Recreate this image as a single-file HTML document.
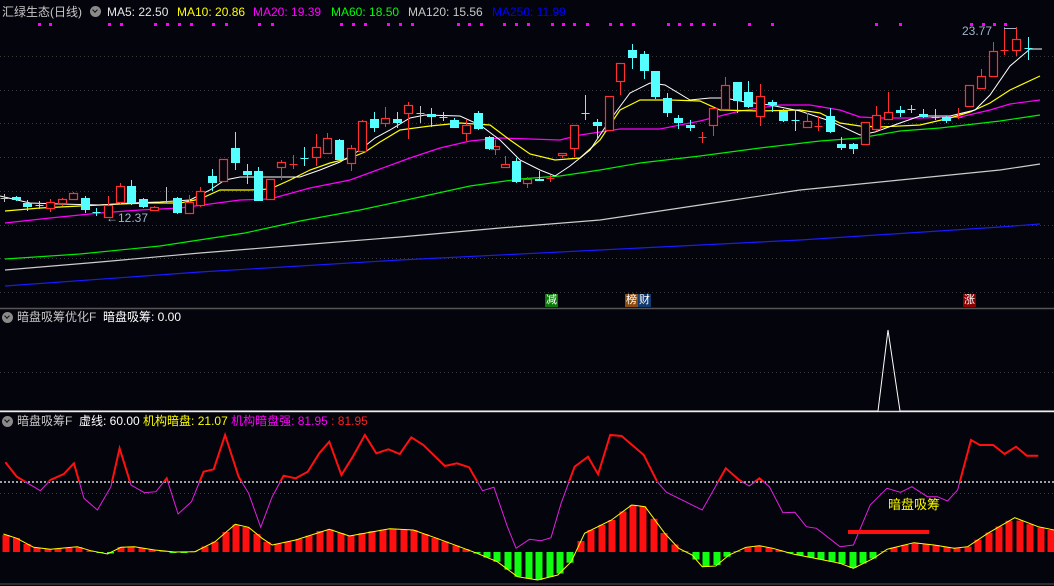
<!DOCTYPE html>
<html><head><meta charset="utf-8">
<style>
html,body{margin:0;padding:0;background:#04040c;}
#w{position:relative;width:1054px;height:586px;overflow:hidden;background:#04040c;font-family:"Liberation Sans","Noto Sans CJK SC",sans-serif;font-size:12px;}
.t{position:absolute;white-space:nowrap;line-height:14px;}
.ci{position:absolute;width:11px;height:11px;border-radius:50%;background:#8a8a8a;}
.ci:after{content:"";position:absolute;left:3px;top:2px;width:3px;height:3px;border-right:1.5px solid #111;border-bottom:1.5px solid #111;transform:rotate(45deg);}
.bx{position:absolute;width:13px;height:13px;color:#fff;font-size:11px;line-height:13px;text-align:center;}
svg{position:absolute;left:0;top:0;}
.rb{fill:#04040c;stroke:#ff3030;stroke-width:1.2}
.cb{fill:#54ffff}
.hr{fill:#ff1010}.hg{fill:#10ff10}
</style></head><body>
<div id="w">
<svg width="1054" height="586" viewBox="0 0 1054 586">
<g stroke="#3a3a3a" stroke-dasharray="1 3">
<line x1="0" y1="56.5" x2="1054" y2="56.5"/><line x1="0" y1="90.5" x2="1054" y2="90.5"/><line x1="0" y1="123.5" x2="1054" y2="123.5"/><line x1="0" y1="157.5" x2="1054" y2="157.5"/><line x1="0" y1="191.5" x2="1054" y2="191.5"/><line x1="0" y1="225.5" x2="1054" y2="225.5"/><line x1="0" y1="258.5" x2="1054" y2="258.5"/><line x1="0" y1="292.5" x2="1054" y2="292.5"/><line x1="0" y1="372.5" x2="1054" y2="372.5"/><line x1="0" y1="493.5" x2="1054" y2="493.5"/>
</g>
<line x1="0" y1="308.5" x2="1054" y2="308.5" stroke="#555" stroke-width="1.5"/>
<line x1="0" y1="411.5" x2="1054" y2="411.5" stroke="#ddd" stroke-width="1.5"/>
<line x1="0" y1="584" x2="1054" y2="584" stroke="#555"/>
<g fill="#ff00ff">
<rect x="38" y="23" width="3" height="3"/><rect x="49" y="23" width="3" height="3"/><rect x="108" y="23" width="3" height="3"/><rect x="120" y="23" width="3" height="3"/><rect x="154" y="23" width="3" height="3"/><rect x="166" y="23" width="3" height="3"/><rect x="178" y="23" width="3" height="3"/><rect x="190" y="23" width="3" height="3"/><rect x="212" y="23" width="3" height="3"/><rect x="225" y="23" width="3" height="3"/><rect x="258" y="23" width="3" height="3"/><rect x="271" y="23" width="3" height="3"/><rect x="340" y="23" width="3" height="3"/><rect x="352" y="23" width="3" height="3"/><rect x="364" y="23" width="3" height="3"/><rect x="387" y="23" width="3" height="3"/><rect x="399" y="23" width="3" height="3"/><rect x="411" y="23" width="3" height="3"/><rect x="457" y="23" width="3" height="3"/><rect x="468" y="23" width="3" height="3"/><rect x="480" y="23" width="3" height="3"/><rect x="503" y="23" width="3" height="3"/><rect x="515" y="23" width="3" height="3"/><rect x="527" y="23" width="3" height="3"/><rect x="551" y="23" width="3" height="3"/><rect x="562" y="23" width="3" height="3"/><rect x="573" y="23" width="3" height="3"/><rect x="586" y="23" width="3" height="3"/><rect x="609" y="23" width="3" height="3"/><rect x="620" y="23" width="3" height="3"/><rect x="632" y="23" width="3" height="3"/><rect x="667" y="23" width="3" height="3"/><rect x="678" y="23" width="3" height="3"/><rect x="690" y="23" width="3" height="3"/><rect x="702" y="23" width="3" height="3"/><rect x="713" y="23" width="3" height="3"/><rect x="748" y="23" width="3" height="3"/><rect x="771" y="23" width="3" height="3"/><rect x="875" y="23" width="3" height="3"/><rect x="899" y="23" width="3" height="3"/><rect x="970" y="23" width="3" height="3"/><rect x="982" y="23" width="3" height="3"/><rect x="993" y="23" width="3" height="3"/><rect x="1004" y="23" width="3" height="3"/>
</g>
<g fill="none" stroke-width="1.2">
<polyline stroke="#1a1aff" points="5,286 200,272 400,260 600,250 800,240 1000,227 1040,224"/>
<polyline stroke="#cccccc" points="5,270 100,262 200,253 300,245 400,237 500,228 600,220 700,205 800,190 900,180 1000,170 1040,164"/>
<polyline stroke="#00ee00" points="5,259 80,254 160,246 245,233 300,221 360,210 420,197 470,186 520,179 560,176 600,170 640,163 700,156 760,148 820,141 860,138 900,131 940,128 1000,121 1040,115"/>
<polyline stroke="#ff00ff" points="5,223 50,218 100,213 140,210 180,208 210,204 240,200 270,199 310,188 350,180 380,169 410,158 440,148 470,141 500,138 530,139 560,140 580,135 620,129 660,129 700,121 740,111 780,105 810,105 840,110 860,117 880,118 920,118 960,117 990,110 1010,104 1040,100"/>
<polyline stroke="#ffff00" points="5,211 40,208 80,206 120,204 150,203 180,203 200,199 220,190 250,190 270,189 290,180 310,170 330,163 350,158 365,152 380,142 400,130 430,126 460,123 490,125 510,140 530,154 555,160 580,158 600,140 620,110 640,100 670,100 700,101 720,110 760,111 800,110 820,113 840,123 860,126 880,127 920,125 950,118 970,112 990,103 1010,90 1040,76"/>
<polyline stroke="#ffffff" stroke-width="1" points="0,196 30,203 60,204 100,205 130,203 160,202 190,200 210,190 225,180 240,177 300,177 320,170 340,162 360,150 375,138 390,130 410,118 425,115 460,116 480,125 500,140 520,160 540,170 555,176 570,166 590,150 610,120 630,93 650,83 665,85 690,100 710,98 725,98 745,102 770,105 800,111 830,121 860,135 875,132 900,123 920,116 950,116 975,110 990,95 1010,66 1030,49 1042,49"/>
</g>
<!-- gray crosses -->
<path stroke="#c0c0c0" fill="none" d="M4.5 194V202M0.5 198.5H8.5M166.5 187V203M162.5 201.5H170.5M420.5 106V123M416.5 113.5H424.5"/>
<!-- red wicks -->
<path stroke="#ff3030" fill="none" d="M50.5 199V212M62.5 198V206M73.5 192V200M108.5 196V217M120.5 183V204M154.5 206V211M189.5 195V213M200.5 187V207M223.5 159V181M270.5 179V200M281.5 160V180M293.5 155V169M289.5 164.5H297.5M316.5 134V166M327.5 133V153M351.5 145V171M362.5 120V151M385.5 107V127M408.5 102V139M466.5 120V141M495.5 140V155M505.5 156V167M527.5 177V188M550.5 175V182M546.5 178.5H554.5M562.5 153V158M574.5 125V157M609.5 96V130M620.5 63V95M702.5 132V143M698.5 137.5H706.5M713.5 108V136M725.5 77V109M760.5 84V126M807.5 113V127M818.5 116V131M814.5 126.5H822.5M865.5 122V144M876.5 106V131M888.5 92V119M958.5 108V119M954.5 117.5H962.5M969.5 85V106M981.5 69V88M993.5 42V77M1004.5 27V55M1000.5 50.5H1008.5M1016.5 27V56"/>
<g class="rb">
<rect x="46.5" y="202.5" width="8" height="6"/><rect x="58.5" y="199.5" width="8" height="4"/><rect x="69.5" y="193.5" width="8" height="6"/><rect x="104.5" y="205.5" width="8" height="12"/><rect x="116.5" y="186.5" width="8" height="16"/><rect x="150.5" y="207.5" width="8" height="3"/><rect x="185.5" y="202.5" width="8" height="11"/><rect x="196.5" y="191.5" width="8" height="14"/><rect x="219.5" y="159.5" width="8" height="22"/><rect x="266.5" y="179.5" width="8" height="20"/><rect x="277.5" y="162.5" width="8" height="5"/><rect x="312.5" y="147.5" width="8" height="10"/><rect x="323.5" y="138.5" width="8" height="15"/><rect x="347.5" y="148.5" width="8" height="15"/><rect x="358.5" y="121.5" width="8" height="30"/><rect x="381.5" y="118.5" width="8" height="5"/><rect x="404.5" y="105.5" width="8" height="8"/><rect x="462.5" y="125.5" width="8" height="8"/><rect x="491.5" y="146.5" width="8" height="3"/><rect x="501.5" y="164.5" width="8" height="3"/><rect x="523.5" y="179.5" width="8" height="4"/><rect x="558.5" y="153.5" width="8" height="2"/><rect x="570.5" y="125.5" width="8" height="23"/><rect x="605.5" y="96.5" width="8" height="34"/><rect x="616.5" y="63.5" width="8" height="18"/><rect x="709.5" y="108.5" width="8" height="17"/><rect x="721.5" y="85.5" width="8" height="24"/><rect x="756.5" y="96.5" width="8" height="20"/><rect x="803.5" y="121.5" width="8" height="6"/><rect x="861.5" y="122.5" width="8" height="22"/><rect x="872.5" y="115.5" width="8" height="14"/><rect x="884.5" y="112.5" width="8" height="7"/><rect x="965.5" y="85.5" width="8" height="21"/><rect x="977.5" y="76.5" width="8" height="12"/><rect x="989.5" y="51.5" width="8" height="25"/><rect x="1012.5" y="39.5" width="8" height="11"/>
</g>
<!-- cyan wicks -->
<path stroke="#54ffff" fill="none" d="M16.5 196V201M27.5 200V211M39.5 201V209M35.5 205.5H43.5M85.5 196V213M96.5 208V216M92.5 212.5H100.5M131.5 180V205M143.5 198V208M177.5 197V214M212.5 169V191M235.5 132V170M247.5 164V184M258.5 167V201M304.5 147V166M300.5 158.5H308.5M339.5 139V161M374.5 112V132M397.5 112V128M431.5 108V127M443.5 112V121M439.5 117.5H447.5M454.5 118V128M478.5 111V130M489.5 136V150M516.5 158V183M539.5 171V181M585.5 95V120M581.5 113.5H589.5M597.5 119V138M632.5 44V69M644.5 51V79M655.5 71V99M667.5 93V117M678.5 115V129M690.5 120V131M737.5 82V113M748.5 81V108M772.5 100V112M783.5 109V122M795.5 110V131M791.5 120.5H799.5M830.5 108V133M841.5 137V150M853.5 143V154M900.5 106V117M911.5 105V113M907.5 109.5H915.5M923.5 109V118M935.5 109V120M931.5 117.5H939.5M946.5 116V123M1028.5 37V60M1024.5 48.5H1032.5"/>
<g class="cb">
<rect x="12" y="197" width="9" height="3"/><rect x="23" y="203" width="9" height="4"/><rect x="81" y="198" width="9" height="12"/><rect x="127" y="186" width="9" height="17"/><rect x="139" y="199" width="9" height="8"/><rect x="173" y="198" width="9" height="15"/><rect x="208" y="176" width="9" height="7"/><rect x="231" y="148" width="9" height="15"/><rect x="243" y="171" width="9" height="4"/><rect x="254" y="171" width="9" height="30"/><rect x="335" y="140" width="9" height="20"/><rect x="370" y="119" width="9" height="9"/><rect x="393" y="119" width="9" height="4"/><rect x="427" y="114" width="9" height="3"/><rect x="450" y="120" width="9" height="8"/><rect x="474" y="113" width="9" height="16"/><rect x="485" y="137" width="9" height="12"/><rect x="512" y="161" width="9" height="21"/><rect x="535" y="179" width="9" height="2"/><rect x="593" y="122" width="9" height="4"/><rect x="628" y="50" width="9" height="8"/><rect x="640" y="54" width="9" height="17"/><rect x="651" y="71" width="9" height="26"/><rect x="663" y="98" width="9" height="15"/><rect x="674" y="118" width="9" height="5"/><rect x="686" y="125" width="9" height="3"/><rect x="733" y="82" width="9" height="19"/><rect x="744" y="92" width="9" height="15"/><rect x="768" y="102" width="9" height="3"/><rect x="779" y="111" width="9" height="10"/><rect x="826" y="116" width="9" height="16"/><rect x="837" y="144" width="9" height="4"/><rect x="849" y="144" width="9" height="5"/><rect x="896" y="110" width="9" height="3"/><rect x="919" y="114" width="9" height="3"/><rect x="942" y="117" width="9" height="4"/>
</g>
<line x1="1004" y1="28.5" x2="1016" y2="28.5" stroke="#a0b4c8"/>
<!-- spike panel -->
<polyline fill="none" stroke="#fff" points="0,411 878,411 888,330 900,411 1054,411"/>
<!-- histogram -->
<g class="hr">
<rect x="2.5" y="535" width="7" height="17"/><rect x="13" y="538" width="7" height="14"/><rect x="23.5" y="544" width="7" height="8"/><rect x="33.5" y="548" width="7" height="4"/><rect x="44.5" y="549" width="7" height="3"/><rect x="54.5" y="548.5" width="7" height="3.5"/><rect x="65.5" y="548" width="7" height="4"/><rect x="75.5" y="547" width="7" height="5"/><rect x="86.5" y="550.5" width="7" height="1.5"/><rect x="117.5" y="547" width="7" height="5"/><rect x="127.5" y="547" width="7" height="5"/><rect x="138.5" y="548" width="7" height="4"/><rect x="148.5" y="549.6" width="7" height="2.4"/><rect x="159.5" y="551" width="7" height="1"/><rect x="190.5" y="551" width="7" height="1"/><rect x="201.5" y="546.5" width="7" height="5.5"/><rect x="211.5" y="541.7" width="7" height="10.3"/><rect x="222.5" y="532" width="7" height="20"/><rect x="232.5" y="524.5" width="7" height="27.5"/><rect x="242.5" y="527" width="7" height="25"/><rect x="253.5" y="534" width="7" height="18"/><rect x="263.5" y="542" width="7" height="10"/><rect x="274.5" y="543.8" width="7" height="8.2"/><rect x="284.5" y="541.7" width="7" height="10.3"/><rect x="295.5" y="539" width="7" height="13"/><rect x="305.5" y="535.7" width="7" height="16.3"/><rect x="316.5" y="531" width="7" height="21"/><rect x="326.5" y="529.5" width="7" height="22.5"/><rect x="337.5" y="533" width="7" height="19"/><rect x="347.5" y="535.5" width="7" height="16.5"/><rect x="358.5" y="533" width="7" height="19"/><rect x="368.5" y="531" width="7" height="21"/><rect x="379.5" y="529.6" width="7" height="22.4"/><rect x="389.5" y="528.8" width="7" height="23.2"/><rect x="400.5" y="529.5" width="7" height="22.5"/><rect x="410.5" y="530" width="7" height="22"/><rect x="421.5" y="534" width="7" height="18"/><rect x="431.5" y="538" width="7" height="14"/><rect x="441.5" y="541.5" width="7" height="10.5"/><rect x="452.5" y="545.5" width="7" height="6.5"/><rect x="462.5" y="549" width="7" height="3"/><rect x="577.5" y="541" width="7" height="11"/><rect x="587.5" y="530" width="7" height="22"/><rect x="598.5" y="524.8" width="7" height="27.2"/><rect x="608.5" y="520" width="7" height="32"/><rect x="619.5" y="511.5" width="7" height="40.5"/><rect x="629.5" y="505" width="7" height="47"/><rect x="639.5" y="506.5" width="7" height="45.5"/><rect x="650.5" y="518.8" width="7" height="33.2"/><rect x="660.5" y="533" width="7" height="19"/><rect x="671.5" y="544.5" width="7" height="7.5"/><rect x="681.5" y="551" width="7" height="1"/><rect x="733.5" y="551" width="7" height="1"/><rect x="744.5" y="547" width="7" height="5"/><rect x="754.5" y="545.8" width="7" height="6.2"/><rect x="765.5" y="547.6" width="7" height="4.4"/><rect x="775.5" y="550" width="7" height="2"/><rect x="880.5" y="551" width="7" height="1"/><rect x="890.5" y="547.6" width="7" height="4.4"/><rect x="901.5" y="544.8" width="7" height="7.2"/><rect x="911.5" y="542.8" width="7" height="9.2"/><rect x="922.5" y="544" width="7" height="8"/><rect x="932.5" y="545.3" width="7" height="6.7"/><rect x="943.5" y="547" width="7" height="5"/><rect x="953.5" y="547.6" width="7" height="4.4"/><rect x="964.5" y="546.6" width="7" height="5.4"/><rect x="974.5" y="539.7" width="7" height="12.3"/><rect x="985.5" y="532.6" width="7" height="19.4"/><rect x="995.5" y="526.5" width="7" height="25.5"/><rect x="1005.5" y="520.8" width="7" height="31.2"/><rect x="1016.5" y="520.6" width="7" height="31.4"/><rect x="1026.5" y="524.2" width="7" height="27.8"/><rect x="1037.5" y="527.4" width="7" height="24.6"/><rect x="1047.5" y="530" width="7" height="22"/>
</g>
<g class="hg">
<rect x="96.5" y="552" width="7" height="1"/><rect x="107" y="552" width="7" height="1.5"/><rect x="169.5" y="552" width="7" height="1"/><rect x="180.5" y="552" width="7" height="1"/><rect x="473.5" y="552" width="7" height="1.5"/><rect x="483.5" y="552" width="7" height="5.5"/><rect x="493.5" y="552" width="7" height="9.7"/><rect x="504.5" y="552" width="7" height="17.6"/><rect x="514.5" y="552" width="7" height="24.7"/><rect x="525.5" y="552" width="7" height="26.6"/><rect x="535.5" y="552" width="7" height="27.9"/><rect x="546.5" y="552" width="7" height="25"/><rect x="556.5" y="552" width="7" height="21.5"/><rect x="566.5" y="552" width="7" height="10.7"/><rect x="692.5" y="552" width="7" height="7.5"/><rect x="702.5" y="552" width="7" height="14.6"/><rect x="713.5" y="552" width="7" height="13"/><rect x="723.5" y="552" width="7" height="4.7"/><rect x="786.5" y="552" width="7" height="1.2"/><rect x="796.5" y="552" width="7" height="3.4"/><rect x="807.5" y="552" width="7" height="5.5"/><rect x="817.5" y="552" width="7" height="7.5"/><rect x="828.5" y="552" width="7" height="9.7"/><rect x="838.5" y="552" width="7" height="12"/><rect x="849.5" y="552" width="7" height="16"/><rect x="859.5" y="552" width="7" height="11.5"/><rect x="869.5" y="552" width="7" height="6.5"/>
</g>
<polyline fill="none" stroke="#ffff00" points="3.4,534 16.8,538.3 33.6,547.3 50.4,549.3 77.3,546.7 90.7,550.7 107.5,554 121,547.3 134.4,546.7 154.6,550 174.7,552 194.9,551.7 215,541.7 235.2,524.3 248.6,527.3 262.1,538.3 272.2,545 295.7,540 329.3,529.3 349.4,536 389.8,528.7 413.3,530 436.8,538.3 463.7,548.3 477.1,553.3 497.3,561.7 517.4,576.7 537.6,580 557.8,575 571.2,561.7 584.6,533.3 611.5,520 631.7,505 645.1,506.7 665.3,534 678.7,548.3 692.2,555 702.2,566.7 715.7,566 729.1,555 745.9,547.3 759.4,545.7 772.8,548.3 793,554 819.8,559.3 840,563.3 853.4,568.3 873.6,558.3 887,549.3 913.9,542.7 934.1,545 954.2,548.3 967.7,546.7 987.8,533.3 1014.7,517.7 1038.2,526.7 1054,530"/>
<line x1="0" y1="482" x2="1054" y2="482" stroke="#fff" stroke-width="1.2" stroke-dasharray="2 2"/>
<defs><clipPath id="up"><rect x="0" y="420" width="1054" height="62"/></clipPath></defs>
<polyline id="rl" fill="none" stroke="#e020e0" stroke-width="1" points="5.4,462.3 16.8,476.7 40.3,490.7 50.4,480 63.8,474 73.9,463.3 84,498.3 97.4,510 110.9,486.7 119.6,448.3 131,485 144.5,492.7 155.9,491.7 166.7,478.3 178.1,514 191.5,501.7 203.6,471.7 213.7,469.3 225.1,435 238.6,476.7 248.6,493.3 260.7,527.3 272.2,496.7 283.6,475.7 295.7,478.3 307.8,471.7 319.2,453.3 329.3,441.7 341.4,475 352.8,456.7 364.9,435 376.3,453.3 388.4,449.3 399.8,454 411.3,437.3 423.4,445 444.9,466 457,463.3 469.1,467.3 482.5,490.7 493.9,487.3 507.4,526.7 516.1,548.3 529.5,539.3 541,540.7 551,537.7 561.1,503.3 574.6,466.7 588,456.7 598.1,474.3 610.2,435 621.6,436 643.8,455 657.2,481.7 666.6,492.3 702.2,510 725.8,468.3 739.2,480 749.3,486 759.4,478.3 769.4,486.7 782.9,512.7 794.9,512.3 806.4,526.7 816.5,528.3 840,546.7 853.4,545 870.2,505 887,488.3 900.5,492.3 911.9,486.7 927.4,496.7 937.4,496.7 947.5,501 957.6,490 971,440 979.8,445 993.2,445 1004.6,454 1016,446.7 1026.8,455.7 1038.2,455.7"/>
<polyline fill="none" stroke="#ff1010" stroke-width="2" clip-path="url(#up)" points="5.4,462.3 16.8,476.7 40.3,490.7 50.4,480 63.8,474 73.9,463.3 84,498.3 97.4,510 110.9,486.7 119.6,448.3 131,485 144.5,492.7 155.9,491.7 166.7,478.3 178.1,514 191.5,501.7 203.6,471.7 213.7,469.3 225.1,435 238.6,476.7 248.6,493.3 260.7,527.3 272.2,496.7 283.6,475.7 295.7,478.3 307.8,471.7 319.2,453.3 329.3,441.7 341.4,475 352.8,456.7 364.9,435 376.3,453.3 388.4,449.3 399.8,454 411.3,437.3 423.4,445 444.9,466 457,463.3 469.1,467.3 482.5,490.7 493.9,487.3 507.4,526.7 516.1,548.3 529.5,539.3 541,540.7 551,537.7 561.1,503.3 574.6,466.7 588,456.7 598.1,474.3 610.2,435 621.6,436 643.8,455 657.2,481.7 666.6,492.3 702.2,510 725.8,468.3 739.2,480 749.3,486 759.4,478.3 769.4,486.7 782.9,512.7 794.9,512.3 806.4,526.7 816.5,528.3 840,546.7 853.4,545 870.2,505 887,488.3 900.5,492.3 911.9,486.7 927.4,496.7 937.4,496.7 947.5,501 957.6,490 971,440 979.8,445 993.2,445 1004.6,454 1016,446.7 1026.8,455.7 1038.2,455.7"/>
<rect x="848" y="530" width="81" height="4" fill="#ff1010"/>
</svg>
<div class="t" style="left:2px;top:5px;color:#c8c8c8">汇绿生态(日线)</div>
<div class="ci" style="left:90px;top:6px"></div>
<div class="t" style="left:107px;top:5px;color:#e8e8e8">MA5: 22.50</div>
<div class="t" style="left:177px;top:5px;color:#ffff00">MA10: 20.86</div>
<div class="t" style="left:253px;top:5px;color:#ff00ff">MA20: 19.39</div>
<div class="t" style="left:331px;top:5px;color:#00ff00">MA60: 18.50</div>
<div class="t" style="left:408px;top:5px;color:#c8c8c8">MA120: 15.56</div>
<div class="t" style="left:492px;top:5px;color:#0000ff">MA250: 11.99</div>
<div class="t" style="left:106px;top:211px;color:#a0b4c8">←12.37</div>
<div class="t" style="left:962px;top:24px;color:#a0b4c8">23.77</div>
<div class="bx" style="left:545px;top:294px;background:#0a7a0a">减</div>
<div class="bx" style="left:625px;top:294px;background:#8a4a10">榜</div>
<div class="bx" style="left:638px;top:294px;background:#103a70">财</div>
<div class="bx" style="left:963px;top:294px;background:#8a0000">涨</div>
<div class="ci" style="left:2px;top:312px"></div>
<div class="t" style="left:17px;top:310px;color:#c8c8c8">暗盘吸筹优化F&nbsp; <span style="color:#fff">暗盘吸筹: 0.00</span></div>
<div class="ci" style="left:2px;top:416px"></div>
<div class="t" style="left:17px;top:414px;color:#c8c8c8">暗盘吸筹F&nbsp; <span style="color:#fff">虚线: 60.00</span> <span style="color:#ffff00">机构暗盘: 21.07</span> <span style="color:#ff00ff">机构暗盘强: 81.95</span> <span style="color:#ff2020">: 81.95</span></div>
<div class="t" style="left:888px;top:498px;color:#ffff00;font-size:13px">暗盘吸筹</div>
</div>
</body></html>
